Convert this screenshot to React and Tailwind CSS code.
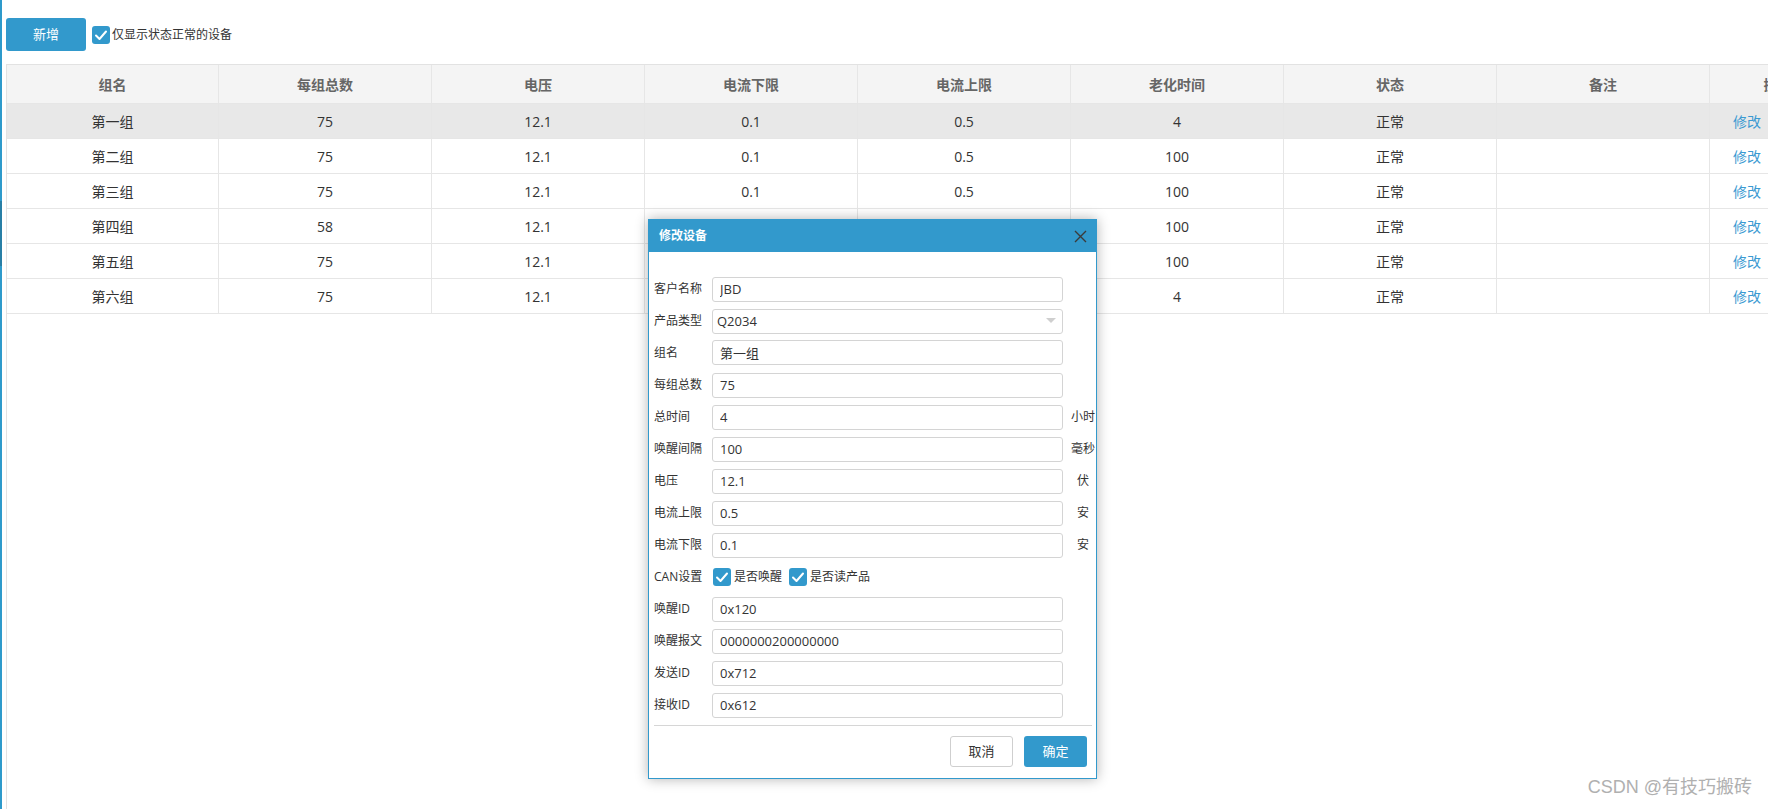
import React from "react";

const headers = ["组名", "每组总数", "电压", "电流下限", "电流上限", "老化时间", "状态", "备注", "操作"];

const rows = [
  ["第一组", "75", "12.1", "0.1", "0.5", "4", "正常", ""],
  ["第二组", "75", "12.1", "0.1", "0.5", "100", "正常", ""],
  ["第三组", "75", "12.1", "0.1", "0.5", "100", "正常", ""],
  ["第四组", "58", "12.1", "0.1", "0.5", "100", "正常", ""],
  ["第五组", "75", "12.1", "0.1", "0.5", "100", "正常", ""],
  ["第六组", "75", "12.1", "0.1", "0.5", "4", "正常", ""],
];

const fields = [
  { label: "客户名称", value: "JBD" },
  { label: "产品类型", value: "Q2034", select: true },
  { label: "组名", value: "第一组" },
  { label: "每组总数", value: "75" },
  { label: "总时间", value: "4", unit: "小时" },
  { label: "唤醒间隔", value: "100", unit: "毫秒" },
  { label: "电压", value: "12.1", unit: "伏" },
  { label: "电流上限", value: "0.5", unit: "安" },
  { label: "电流下限", value: "0.1", unit: "安" },
  { label: "CAN设置", can: true },
  { label: "唤醒ID", value: "0x120" },
  { label: "唤醒报文", value: "0000000200000000" },
  { label: "发送ID", value: "0x712" },
  { label: "接收ID", value: "0x612" },
];

const grid =
  "grid grid-cols-[212px_213px_213px_213px_213px_213px_213px_213px_136px]";

const Check = () => (
  <span className="w-[18px] h-[18px] shrink-0 rounded-[3px] bg-[#3299cc] flex items-center justify-center">
    <svg width="14" height="14" viewBox="0 0 14 14" fill="none">
      <polyline points="2,7.5 5.5,11 12,3.5" stroke="#fff" strokeWidth="2" strokeLinecap="round" strokeLinejoin="round" />
    </svg>
  </span>
);

const Field = ({ f }) => {
  if (f.can) {
    return (
      <div className="flex items-center h-[25px]">
        <span className="w-[58px] text-[12px] text-[#333]">{f.label}</span>
        <span className="flex items-center gap-[3px] ml-[1px]">
          <Check />
          <span className="text-[12px] text-[#333]">是否唤醒</span>
        </span>
        <span className="flex items-center gap-[3px] ml-[7px]">
          <Check />
          <span className="text-[12px] text-[#333]">是否读产品</span>
        </span>
      </div>
    );
  }
  return (
    <div className="flex items-center h-[25px]">
      <span className="w-[58px] shrink-0 text-[12px] text-[#333]">{f.label}</span>
      <div className="relative w-[351px] h-[25px] shrink-0">
        <input
          readOnly
          defaultValue={f.value}
          className={
            f.select
              ? "w-full h-full border border-[#d4d4d4] rounded-[3px] pl-[4px] text-[13px] text-[#333] outline-none"
              : "w-full h-full border border-[#d4d4d4] rounded-[3px] px-[7px] text-[13px] text-[#333] outline-none"
          }
        />
        {f.select && (
          <span className="absolute right-[7px] top-[10px] w-0 h-0 border-l-[5px] border-r-[5px] border-t-[5px] border-l-transparent border-r-transparent border-t-[#cfcfcf]" />
        )}
      </div>
      {f.unit && (
        <span className="ml-[7px] w-[26px] shrink-0 text-center text-[12px] text-[#333] whitespace-nowrap">
          {f.unit}
        </span>
      )}
    </div>
  );
};

export default function App() {
  return (
    <div className="relative w-full h-[809px] flex overflow-hidden bg-white font-['Open_Sans','Noto_Sans_CJK_SC',sans-serif]">
      <div className="w-[2px] h-full bg-[#2e9acb] shrink-0">
        <div className="mt-[201px] h-[65px] bg-[#287fa6]" />
      </div>

      <div className="flex-1 min-w-0 flex flex-col pl-[4px]">
        <div className="flex items-center pt-[18px] pb-[13px]">
          <button className="w-[80px] h-[33px] rounded-[3px] bg-[#3299cc] text-white text-[13px]">
            新增
          </button>
          <span className="ml-[6px] flex items-center gap-[2px]">
            <Check />
            <span className="text-[12px] text-[#333]">仅显示状态正常的设备</span>
          </span>
        </div>

        <div className="flex-1 border-l border-t border-[#e2e2e2] overflow-hidden">
          <div className={grid + " bg-[#f4f4f4] w-max"}>
            {headers.map((h) => (
              <div
                key={h}
                className="h-[39px] flex items-center justify-center border-r border-b border-[#e6e6e6] text-[14px] font-bold text-[#666]"
              >
                {h}
              </div>
            ))}
          </div>
          {rows.map((r, i) => (
            <div key={i} className={grid + " w-max " + (i === 0 ? "bg-[#e8e8e8]" : "bg-white")}>
              {r.map((c, j) => (
                <div
                  key={j}
                  className="h-[35px] flex items-center justify-center border-r border-b border-[#e6e6e6] text-[14px] text-[#333]"
                >
                  {c}
                </div>
              ))}
              <div className="h-[35px] flex items-center pl-[23px] border-r border-b border-[#e6e6e6] text-[14px] text-[#3a9ad2]">
                修改
              </div>
            </div>
          ))}
        </div>
      </div>

      {/* dialog */}
      <div className="absolute left-[648px] top-[219px] w-[449px] border border-[#3299cc] bg-white overflow-hidden shadow-[0_0_12px_rgba(0,0,0,0.3)]">
        <div className="h-[32px] bg-[#3299cc] flex items-center justify-between pl-[10px] pr-[9px]">
          <span className="text-[12px] font-bold text-white">修改设备</span>
          <svg width="13" height="13" viewBox="0 0 13 13">
            <path d="M1 1L12 12M12 1L1 12" stroke="#3b3b3b" strokeWidth="1.4" />
          </svg>
        </div>
        <div className="pt-[24px] pl-[5px] flex flex-col gap-[7px]">
          {fields.map((f) => (
            <Field key={f.label} f={f} />
          ))}
        </div>
        <div className="mt-[8px] ml-[5px] mr-[4px] h-px bg-[#d6d6d6]" />
        <div className="flex justify-end gap-[11px] pt-[10px] pb-[11px] pr-[9px]">
          <button className="w-[63px] h-[31px] rounded-[3px] border border-[#cfcfcf] bg-white text-[13px] text-[#333]">
            取消
          </button>
          <button className="w-[63px] h-[31px] rounded-[3px] bg-[#3299cc] text-[13px] text-white">
            确定
          </button>
        </div>
      </div>

      <div className="absolute right-[16px] bottom-[8px] text-[18px] text-[#b0b0b0] font-['Liberation_Sans','Noto_Sans_CJK_SC',sans-serif]">
        CSDN @有技巧搬砖
      </div>
    </div>
  );
}
